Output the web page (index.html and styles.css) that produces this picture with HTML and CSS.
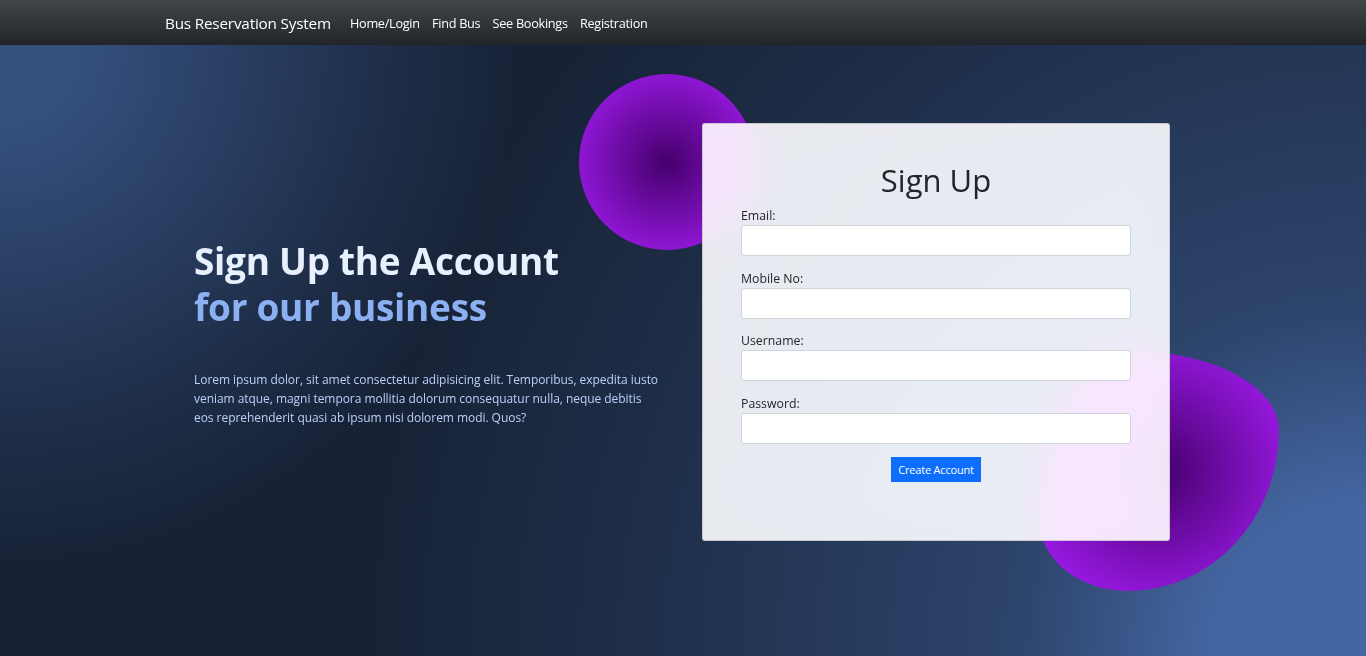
FILE: index.html
```
<!DOCTYPE html>
<html lang="en">
<head>
<meta charset="utf-8">
<title>Bus Reservation System</title>
<link rel="stylesheet" href="styles.css">
</head>
<body>
<nav class="navbar">
  <div class="nav-inner">
    <a class="brand" href="#">Bus Reservation System</a>
    <ul class="nav-links">
      <li><a href="#">Home/Login</a></li>
      <li><a href="#">Find Bus</a></li>
      <li><a href="#">See Bookings</a></li>
      <li><a href="#">Registration</a></li>
    </ul>
  </div>
</nav>
<section class="hero">
  <div class="hero-row">
    <div class="intro">
      <h1 class="intro-title">Sign Up the Account <br><span class="accent">for our business</span></h1>
      <p class="intro-text">Lorem ipsum dolor, sit amet consectetur adipisicing elit. Temporibus, expedita iusto veniam atque, magni tempora mollitia dolorum consequatur nulla, neque debitis eos reprehenderit quasi ab ipsum nisi dolorem modi. Quos?</p>
    </div>
    <div class="card-wrap">
      <div class="shape shape-1"></div>
      <div class="shape shape-2"></div>
      <form class="card">
        <h2 class="card-title">Sign Up</h2>
        <div class="field">
          <label class="label" for="email">Email:</label>
          <input class="input" id="email" type="email">
        </div>
        <div class="field">
          <label class="label" for="mobile">Mobile No:</label>
          <input class="input" id="mobile" type="text">
        </div>
        <div class="field">
          <label class="label" for="username">Username:</label>
          <input class="input" id="username" type="text">
        </div>
        <div class="field">
          <label class="label" for="password">Password:</label>
          <input class="input" id="password" type="password">
        </div>
        <div class="actions">
          <button class="btn" type="button">Create Account</button>
        </div>
      </form>
    </div>
  </div>
</section>
</body>
</html>
```

FILE: styles.css
```
* { box-sizing: border-box; }
html, body { margin: 0; padding: 0; height: 100%; }
body {
  font-family: "Open Sans", "Noto Sans", sans-serif;
  overflow: hidden;
  background: #1b263b;
}
.navbar {
  height: 45px;
  background-color: #212529;
  background-image: linear-gradient(180deg, rgba(255,255,255,0.15), rgba(255,255,255,0));
  display: flex;
  align-items: center;
}
.nav-inner {
  display: flex;
  align-items: center;
  padding-left: 165px;
}
.brand {
  color: #fff;
  text-decoration: none;
  font-size: 15.3px;
  margin-right: 13px;
  letter-spacing: -0.2px;
}
.nav-links {
  list-style: none;
  margin: 0;
  padding: 0;
  display: flex;
}
.nav-links a {
  display: block;
  color: #fff;
  text-decoration: none;
  font-size: 12.7px;
  padding: 0 6.1px;
  letter-spacing: -0.28px;
}
.hero {
  height: calc(100vh - 45px);
  background-color: hsl(218, 41%, 15%);
  background-image:
    radial-gradient(520px circle at 0% 0%, hsl(218, 41%, 35%) 15%, hsl(218, 41%, 30%) 35%, hsl(218, 41%, 20%) 75%, hsl(218, 41%, 19%) 80%, transparent 100%),
    radial-gradient(1000px circle at 100% 100%, hsl(218, 41%, 45%) 15%, hsl(218, 41%, 30%) 35%, hsl(218, 41%, 20%) 75%, hsl(218, 41%, 19%) 80%, transparent 100%);
  padding-top: 78px;
}
.hero-row {
  display: flex;
  align-items: center;
  padding-left: 194px;
}
.intro {
  width: 509px;
  padding-top: 4px;
  padding-bottom: 2px;
}
.intro-title {
  margin: 0 0 41px;
  font-size: 37px;
  line-height: 46px;
  font-weight: 700;
  letter-spacing: -0.3px;
  color: hsl(218, 81%, 95%);
}
.accent { color: hsl(218, 81%, 75%); }
.intro-text {
  margin: 0;
  width: 466px;
  font-size: 12px;
  line-height: 18.7px;
  letter-spacing: -0.05px;
  color: hsl(218, 81%, 85%);
}
.card-wrap {
  position: relative;
  width: 468px;
  margin-left: -1px;
}
.shape {
  position: absolute;
  background: radial-gradient(#44006b, #ad1fff);
}
.shape-1 {
  width: 176px;
  height: 176px;
  left: -123px;
  top: -49px;
  border-radius: 50%;
}
.shape-2 {
  width: 240px;
  height: 240px;
  right: -109px;
  bottom: -50px;
  border-radius: 38% 62% 63% 37% / 70% 33% 67% 30%;
}
.card {
  position: relative;
  height: 418px;
  background-color: hsla(0, 0%, 100%, 0.9);
  backdrop-filter: saturate(200%) blur(20px);
  border: 1px solid rgba(0,0,0,0.15);
  border-radius: 3px;
  padding: 37px 38px 38px;
  display: flex;
  flex-direction: column;
}
.card-title {
  margin: 0 0 6px;
  text-align: center;
  font-size: 31px;
  line-height: 39px;
  font-weight: 400;
  color: #212529;
}
.field {
  display: flex;
  flex-direction: column;
  margin-bottom: 12.5px;
}
.label {
  font-size: 12.3px;
  line-height: 19px;
  color: #212529;
}
.input {
  height: 31px;
  border: 1px solid #ced4da;
  border-radius: 3px;
  background: #fff;
  font-family: inherit;
}
.actions {
  display: flex;
  justify-content: center;
  margin-top: 1px;
}
.btn {
  height: 25px;
  width: 90px;
  padding: 0;
  border: 0;
  border-radius: 0;
  background: #0d6efd;
  color: #fff;
  font-family: inherit;
  font-size: 11px;
  letter-spacing: -0.2px;
}
```
